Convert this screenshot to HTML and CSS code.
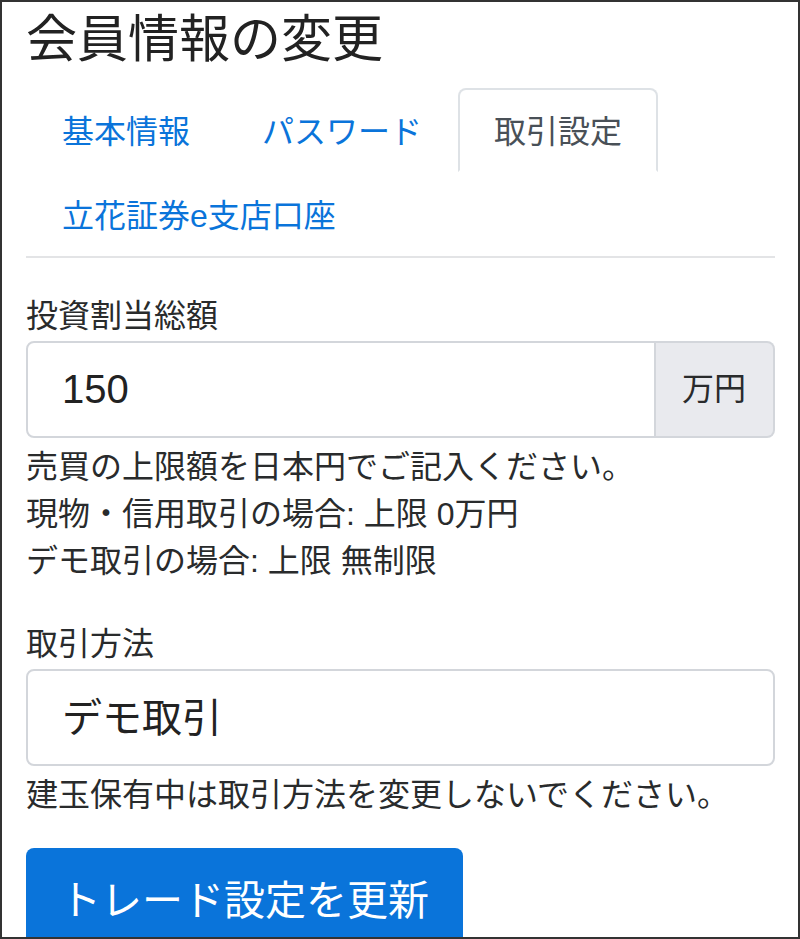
FILE: index.html
```html
<!DOCTYPE html>
<html lang="ja">
<head>
    <meta charset="UTF-8">
    <meta name="viewport" content="width=device-width, initial-scale=1.0">
    <title>会員情報の変更</title>
    <link rel="stylesheet" href="styles.css">
</head>
<body>
    <div class="frame">
        <h1 class="page-title">会員情報の変更</h1>

        <ul class="nav-tabs">
            <li><a class="nav-link" href="#">基本情報</a></li>
            <li><a class="nav-link" href="#">パスワード</a></li>
            <li><a class="nav-link active" href="#">取引設定</a></li>
            <li><a class="nav-link" href="#">立花証券e支店口座</a></li>
        </ul>

        <form class="trade-form">
            <div class="form-group">
                <label for="budget">投資割当総額</label>
                <div class="input-group">
                    <input id="budget" class="form-control" type="text" value="150">
                    <span class="input-addon">万円</span>
                </div>
                <p class="help">売買の上限額を日本円でご記入ください。<br>現物・信用取引の場合: 上限 0万円<br>デモ取引の場合: 上限 無制限</p>
            </div>

            <div class="form-group">
                <label for="method">取引方法</label>
                <select id="method" class="form-control">
                    <option>デモ取引</option>
                    <option>現物取引</option>
                    <option>信用取引</option>
                </select>
                <p class="help">建玉保有中は取引方法を変更しないでください。</p>
            </div>

            <button type="submit" class="btn-primary">トレード設定を更新</button>
        </form>
    </div>
</body>
</html>
```

FILE: styles.css
```css
html, body {
    margin: 0;
    padding: 0;
    background-color: #fff;
}
.frame {
    box-sizing: border-box;
    height: 100vh;
    overflow: hidden;
    border: 2px solid #333;
    padding: 0 23px 0 24px;
    font-family: "Liberation Sans", "Noto Sans CJK JP", sans-serif;
    font-size: 32px;
    line-height: 47px;
    color: #292b2c;
}
.page-title {
    margin: 8px 0 18px;
    font-size: 51px;
    line-height: 60px;
    font-weight: 400;
    color: #222;
}
.nav-tabs {
    display: flex;
    flex-wrap: wrap;
    list-style: none;
    margin: 0 0 35px;
    padding: 0;
    border-bottom: 2px solid #e3e4e6;
}
.nav-link {
    display: block;
    padding: 18px 34px 14px;
    line-height: 48px;
    border: 2px solid transparent;
    border-radius: 8px 8px 0 0;
    color: #0a74da;
    text-decoration: none;
}
.nav-link.active {
    color: #495057;
    border-color: #dee2e6 #dee2e6 transparent;
    background-color: #fff;
}
.form-group {
    margin-bottom: 36px;
}
.form-group:last-of-type {
    margin-bottom: 29px;
}
.form-group label {
    display: block;
    margin-bottom: 1px;
}
.input-group {
    display: flex;
}
.form-control {
    box-sizing: border-box;
    display: block;
    width: 100%;
    height: 97px;
    padding: 0 34px;
    border: 2px solid #d3d6db;
    border-radius: 8px;
    background-color: #fff;
    font-family: inherit;
    font-size: 40px;
    color: #222;
    appearance: none;
    -webkit-appearance: none;
}
.input-group .form-control {
    flex: 1;
    border-radius: 8px 0 0 8px;
}
.input-addon {
    display: flex;
    align-items: center;
    padding: 0 27px 0 26px;
    border: 2px solid #d3d6db;
    border-left: 0;
    border-radius: 0 8px 8px 0;
    background-color: #e9eaee;
    color: #292b2c;
}
.help {
    margin: 6px 0 0;
}
.btn-primary {
    display: inline-block;
    height: 97px;
    padding: 0 34px;
    border: 0;
    border-radius: 8px;
    background-color: #0a74da;
    color: #fff;
    font-family: inherit;
    font-size: 41px;
    cursor: pointer;
}
```
